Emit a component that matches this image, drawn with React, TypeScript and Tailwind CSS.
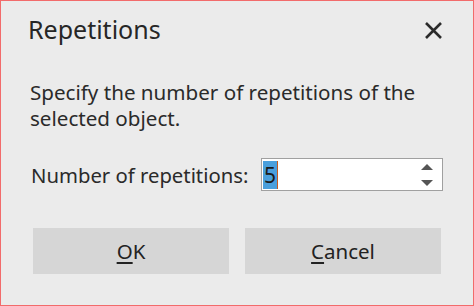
export default function App() {
  return (
    <div className="w-[474px] h-[306px] border border-[#f26b6b] bg-[#ebebeb] text-[#222] flex flex-col" style={{ fontFamily: '"Noto Sans", "Open Sans", sans-serif' }}>
      <div className="flex items-center justify-between pl-[27px] pr-[31px] pt-[12px]">
        <span className="text-[25px] leading-[32px] text-[#262626]">Repetitions</span>
        <svg width="17" height="17" viewBox="0 0 17 17" className="text-[#2b2b2b] mt-[2px]">
          <path d="M1 1 L16 16 M16 1 L1 16" stroke="currentColor" strokeWidth="2.6" />
        </svg>
      </div>
      <p className="px-[29px] mt-[34px] text-[20.6px] leading-[26px] text-[#2a2a2a]">
        Specify the number of repetitions of the selected object.
      </p>
      <div className="flex items-center px-[30px] mt-[27px]">
        <span className="text-[20.3px] leading-[26px] text-[#2a2a2a]">Number of repetitions:</span>
        <div className="ml-auto w-[182px] h-[33px] border border-[#a0a0a0] bg-white flex items-center pl-[1px] pr-[9px]">
          <span className="bg-[#4a9fdc] h-[28px] leading-[28px] text-[21px] text-[#1a1a1a] px-[1px] border-r border-[#c65a1e]">5</span>
          <div className="ml-auto flex flex-col gap-[10px]">
            <svg width="12" height="6" viewBox="0 0 12 6"><path d="M0 6 L6 0 L12 6 Z" fill="#555" /></svg>
            <svg width="12" height="6" viewBox="0 0 12 6"><path d="M0 0 L6 6 L12 0 Z" fill="#555" /></svg>
          </div>
        </div>
      </div>
      <div className="flex gap-[16px] px-[32px] mt-[37px]">
        <button className="w-[196px] h-[46px] bg-[#d6d6d6] text-[20.5px] text-[#222]"><span className="underline underline-offset-[3px]">O</span>K</button>
        <button className="w-[196px] h-[46px] bg-[#d6d6d6] text-[20.5px] text-[#222]"><span className="underline underline-offset-[3px]">C</span>ancel</button>
      </div>
    </div>
  );
}
